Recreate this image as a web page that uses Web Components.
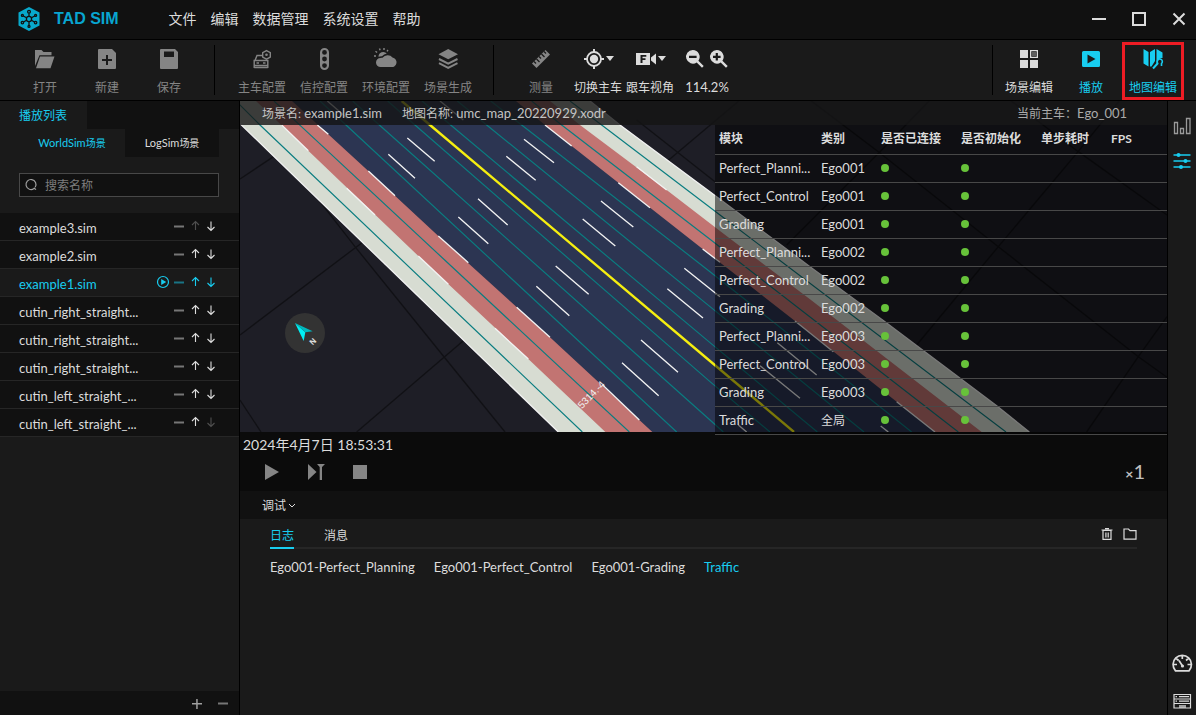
<!DOCTYPE html>
<html lang="zh-CN">
<head>
<meta charset="utf-8">
<meta name="viewport" content="width=device-width, initial-scale=1">
<title>TAD SIM</title>
<style>
  html, body { margin: 0; }
  body {
    --cyan: #18cdf0;
    --panel: #1a1a1a;
    --dark: #111;
    --text: #dcdcdc;
    --mute: #858585;
    background: #000;
    color: var(--text);
    font: 13px/16px Lato, "Noto Sans CJK SC", sans-serif;
  }
</style>
</head>
<body>
<sim-app></sim-app>
<script>
const RESET = `
  *, *::before { box-sizing: border-box; }
  button { all: unset; box-sizing: border-box; cursor: pointer; color: inherit; }
  button:focus-visible { outline: 1px solid var(--cyan); }
  svg { display: block; }
`;

/* Base class: clones the markup of the subclass into an open shadow root. */
class Part extends HTMLElement {
  constructor() {
    super();
    const t = document.createElement('template');
    t.innerHTML = `<style>${RESET}${this.constructor.css}</style>${this.constructor.html}`;
    this.attachShadow({ mode: 'open' }).append(t.content.cloneNode(true));
  }
  static css = '';
  static html = '<slot></slot>';
}

const ICONS = {
  logo: `<path fill="#08a9cc" d="M12 0 22.500 5.600V18.400L12 24 1.500 18.400V5.600z"/>
    <g fill="none" stroke="#111" stroke-width="1.300"><circle cx="12" cy="12" r="2.600"/><circle cx="12" cy="4.800" r="1.400"/><circle cx="12" cy="19.400" r="1"/><circle cx="5.400" cy="8.400" r="1"/><circle cx="18.600" cy="8.400" r="1"/><circle cx="5.400" cy="15.600" r="1.200"/><circle cx="18.600" cy="15.600" r="1.200"/>
    <path d="M12 6.200v3M12 15v3.500M6.300 9l3.300 1.800M17.700 9l-3.300 1.800M6.500 15l3.100-1.800M17.500 15l-3.100-1.800"/></g>`,
  open: `<path d="M2 3h6.500l2 2H18.500v3.200H6.500L2 19zM7 9.500h14.500L17.500 21.300H3z"/>`,
  create: `<path fill-rule="evenodd" d="M4 2h13l4 4v15q0 1-1 1H4q-1 0-1-1V3q0-1 1-1zM11 8v4H7v2h4v4h2v-4h4v-2h-4V8z"/>`,
  save: `<path fill-rule="evenodd" d="M4 2h14l3 3v16q0 1-1 1H4q-1 0-1-1V3q0-1 1-1zM7 4.500v5.500h10V4.500z"/>`,
  car: `<g fill="none" stroke="currentColor" stroke-width="1.400"><path d="M12 8.500H7L5 13.500M4.200 13.500h13.600v5H4.200zM4.200 18.500V21M17.800 18.500V21M4.200 20.500h13.600"/><path d="M6.500 16h2.500M13 16h2.500"/><path d="M16.500 3.600l3.800 2v4.400l-3.800 2.200-3.800-2.200V5.600z"/></g><circle cx="16.500" cy="7.800" r="1.300"/>`,
  light: `<path fill-rule="evenodd" d="M8 5.500a4.500 4.500 0 0 1 9 0v13a4.500 4.500 0 0 1-9 0zM12.500 3a2.400 2.400 0 1 0 0 4.800 2.400 2.400 0 0 0 0-4.800zM12.500 9.600a2.400 2.400 0 1 0 0 4.800 2.400 2.400 0 0 0 0-4.800zM12.500 16.200a2.400 2.400 0 1 0 0 4.800 2.400 2.400 0 0 0 0-4.800z"/>`,
  weather: `<path d="M6.500 20a4.500 4.500 0 0 1 0-9 5 5 0 0 1 2-.2 6.500 6.500 0 0 1 5-2.600 6 6 0 0 1 5 2.300A4.800 4.800 0 0 1 17 20zM4.500 9.800A4.800 4.800 0 0 1 12.800 6.500 8 8 0 0 0 8 9.300 7 7 0 0 0 4.500 9.800z"/><path fill="none" stroke="currentColor" stroke-width="1.400" d="M0 9h2M1.500 4.300l1.600 1.200M5.500 1.500l.6 1.800M10 1v2M14 3l-1 1.400"/>`,
  layers: `<path d="M12.200 2 22 7.300l-9.800 5L2.500 7.300z"/><path fill="none" stroke="currentColor" stroke-width="2" d="M3 12l9.200 4.700 9.300-4.700M3 16.200l9.200 4.700 9.300-4.700"/>`,
  ruler: `<path d="M16.500 3 21 7.500 7.500 21 3 16.500z"/><path stroke="#1a1a1a" stroke-width="1.300" d="M5 14.500l2 2M7.500 12l3 3M10 9.500l2 2M12.500 7l3 3M15 4.500l2 2"/>`,
  target: `<circle cx="12" cy="12" r="7" fill="none" stroke="currentColor" stroke-width="1.800"/><circle cx="12" cy="12" r="4.200"/><path stroke="currentColor" stroke-width="2" d="M12 2v3.500M12 18.500V22M2 12h3.500M18.500 12H22"/>`,
  follow: `<path fill-rule="evenodd" d="M2 6h14v12H2zM6.500 8v8h2v-3h3v-1.800h-3V9.800h3.800V8zM17 10.500l5-4v11l-5-4z"/>`,
  zoomout: `<path fill-rule="evenodd" d="M9.800 3a6.800 6.800 0 0 1 5.600 10.700l5.300 5.300-1.700 1.700-5.300-5.300A6.800 6.800 0 1 1 9.800 3zM6 8.700v2.200h7.600V8.700z"/>`,
  zoomin: `<path fill-rule="evenodd" d="M9.800 3a6.800 6.800 0 0 1 5.600 10.700l5.300 5.300-1.700 1.700-5.300-5.300A6.800 6.800 0 1 1 9.800 3zM8.700 6v2.700H6v2.200h2.700v2.700h2.200v-2.700h2.700V8.700h-2.700V6z"/>`,
  grid: `<path fill-rule="evenodd" d="M3 3h8v8H3zM3 13h8v8H3zM13 13h8v8h-8zM13 3h8v8h-8zM14.300 4.300v5.400h5.400V4.300z"/><path d="M15 5h4v4h-4z" opacity=".35"/>`,
  play: `<path fill-rule="evenodd" d="M4.500 4h15Q21 4 21 5.500v13q0 1.500-1.500 1.500h-15Q3 20 3 18.500v-13Q3 4 4.500 4zM8.500 7.500v9l8-4.500z"/>`,
  map: `<path d="M2.500 2l5 3v14.500l-5-3zM9 5l5-3v12l-3.500 5.500H9zM15.500 2l6 3.500v5.500a4 4 0 0 0-4.500 4.500l-1.500 1.500z"/><path fill="none" stroke="currentColor" stroke-width="2" d="M12 21.500l5-5.500"/><path fill="none" stroke="currentColor" stroke-width="1.600" d="M17 16.500a2.600 2.600 0 1 1 3.500 0v2.500"/>`,
  caret: `<path d="M0 9h8l-4 5z"/>`,
  chevron: `<path fill="none" stroke="currentColor" d="M1 10l3 3 3-3"/>`,
  min: `<path d="M5 11h14v2H5z"/>`,
  max: `<path fill="none" stroke="currentColor" stroke-width="2" d="M6 6h12v12H6z"/>`,
  close: `<path fill="none" stroke="currentColor" stroke-width="2" d="M6.500 6.500l11 11M17.500 6.500l-11 11"/>`,
  search: `<path fill="none" stroke="currentColor" stroke-width="1.200" d="M14 15.500a5 5 0 1 1 1.200-1.300M13.800 14.800l2.200 1.800"/>`,
  bars: `<path fill="none" stroke="currentColor" stroke-width="1.300" d="M4.500 8.500h3v11h-3zM10.500 14.500h3v5h-3zM16.500 4.500h3.500v15h-3.500z"/>`,
  sliders: `<path stroke="currentColor" stroke-width="1.300" d="M3.500 5h17M3.500 11h17M3.500 17h17"/><circle cx="8.500" cy="5" r="2"/><circle cx="15.500" cy="11" r="2"/><circle cx="11" cy="17" r="2"/>`,
  gauge: `<path fill="none" stroke="currentColor" stroke-width="1.700" d="M5.500 19.800A9.200 9.200 0 1 1 19 19.800zM12.300 4.500V8M3.500 13.500H7M17.500 13.500H21M6.300 7.500l2.300 2M18.300 7.500l-2.300 2M12.500 15L9 9.500"/><circle cx="12.500" cy="15" r="1.600"/>`,
  server: `<path fill="none" stroke="currentColor" stroke-width="1.200" d="M4 4.500h16.500v13.500H4zM4 9h16.500M4 13.500h16.500M9 6.700h10M9 11.200h10M5.500 6.700h1.500M5.500 11.200h1.500"/><path d="M9 15h7v3H9z" opacity=".7"/>`,
  minus: `<path d="M7 11.500h10v2H7z" opacity=".5"/>`,
  plus: `<path d="M7 12h10v1.500H7zM11.200 8h1.500v10h-1.500z" opacity=".7"/>`,
  up: `<path fill="none" stroke="currentColor" stroke-width="1.100" d="M12.500 16V7.500M9 11l3.500-3.500L16 11"/>`,
  down: `<path fill="none" stroke="currentColor" stroke-width="1.100" d="M12 7.500V16M8.500 13l3.500 3.500L15.500 13"/>`,
  running: `<circle cx="12" cy="12" r="5.500" fill="none" stroke="currentColor" stroke-width="1.200"/><path d="M10.200 9v6l5-3z"/>`,
  start: `<path d="M5 4l14 8-14 8z"/>`,
  step: `<path d="M4 4l8.500 8L4 20zM13 4h8l-3 3v13h-2.300V7z"/>`,
  stop: `<path d="M5 5h14v14H5z"/>`,
  trash: `<path fill="none" stroke="currentColor" stroke-width="1.200" d="M6.500 8h11M8 8.500h8V17.400H8zM10 6.700h4M10.900 10.500v5M13.200 10.500v5"/>`,
  folder: `<path fill="none" stroke="currentColor" stroke-width="1.200" d="M6 7h4.500l1.500 1.600h6v8.600H6z"/>`
};

class UiIcon extends HTMLElement {
  connectedCallback() {
    if (this.shadowRoot) return;
    const name = this.getAttribute('name');
    const narrow = name === 'caret' || name === 'chevron';
    this.attachShadow({ mode: 'open' }).innerHTML = `
      <style>
        :host { display: block; flex: none; width: ${narrow ? 8 : 24}px; height: 24px; }
        svg { display: block; width: 100%; height: 100%; }
      </style>
      <svg viewBox="0 0 ${narrow ? 8 : 24} 24" fill="currentColor" aria-hidden="true">${ICONS[name]}</svg>`;
  }
}
customElements.define('ui-icon', UiIcon);

class TitleBar extends Part {
  static css = `
    :host { display: flex; align-items: center; height: 40px; padding: 0 3px 1px 17px; background: var(--dark); border-bottom: 1px solid #000; }
    ui-icon.logo { width: 24px; height: 26px; }
    b { margin-left: 13px; font: bold 16px/20px "Liberation Sans", sans-serif; color: #08a5d0; white-space: nowrap; }
    nav { display: flex; gap: 14px; margin-left: 50px; flex: 1; font-size: 14px; line-height: 20px; }
    .win { display: flex; gap: 12px; }
    .win button { width: 28px; padding: 0 2px; }
  `;
  static html = `
    <ui-icon class="logo" name="logo"></ui-icon><b>TAD SIM</b>
    <nav><button>文件</button><button>编辑</button><button>数据管理</button><button>系统设置</button><button>帮助</button></nav>
    <div class="win">
      <button aria-label="最小化"><ui-icon name="min"></ui-icon></button>
      <button aria-label="最大化"><ui-icon name="max"></ui-icon></button>
      <button aria-label="关闭"><ui-icon name="close"></ui-icon></button>
    </div>`;
}
customElements.define('title-bar', TitleBar);

class ToolButton extends Part {
  static css = `
    :host { display: block; width: 62px; height: 60px; color: var(--mute); }
    :host([tight]) { width: 52px; }
    :host([on]) { color: var(--text); }
    :host([active]) { color: var(--cyan); }
    :host([framed]) button { margin-top: 2px; height: 58px; padding-top: 2px; border: 3px solid #ed1c24; }
    button { display: flex; flex-direction: column; align-items: center; gap: 9px; width: 100%; height: 100%; padding-top: 7px; font-size: 12px; line-height: 16px; white-space: nowrap; }
    .icon { display: flex; }
  `;
  static html = `<button><span class="icon"><slot name="icon"></slot></span><span><slot></slot></span></button>`;
}
customElements.define('tool-button', ToolButton);

class ToolGroup extends Part {
  static css = `
    :host { display: flex; align-items: flex-start; padding: 0 0 0 16px; }
    :host([first]) { padding-left: 14px; }
    :host([end]) { margin-left: auto; padding: 0 12px 0 0; }
    i { display: none; align-self: center; width: 1px; height: 50px; background: #000; }
    :host([rule]) i { display: block; margin-left: 14px; }
    :host([end]) i { display: block; order: -1; margin-right: 5px; }
  `;
  static html = `<slot></slot><i></i>`;
}
customElements.define('tool-group', ToolGroup);

class ZoomControl extends Part {
  static css = `
    :host { display: flex; flex-direction: column; align-items: center; gap: 8px; width: 62px; padding-top: 7px; }
    div { display: flex; }
    output { font-size: 13px; line-height: 16px; }
  `;
  static html = `
    <div><button aria-label="缩小"><ui-icon name="zoomout"></ui-icon></button><button aria-label="放大"><ui-icon name="zoomin"></ui-icon></button></div>
    <output>114.2%</output>`;
}
customElements.define('zoom-control', ZoomControl);

class ToolBar extends Part {
  static css = `:host { display: flex; height: 61px; background: var(--panel); border-bottom: 1px solid #000; }`;
  static html = `
    <tool-group first rule>
      <tool-button><ui-icon slot="icon" name="open"></ui-icon>打开</tool-button>
      <tool-button><ui-icon slot="icon" name="create"></ui-icon>新建</tool-button>
      <tool-button><ui-icon slot="icon" name="save"></ui-icon>保存</tool-button>
    </tool-group>
    <tool-group rule>
      <tool-button><ui-icon slot="icon" name="car"></ui-icon>主车配置</tool-button>
      <tool-button><ui-icon slot="icon" name="light"></ui-icon>信控配置</tool-button>
      <tool-button><ui-icon slot="icon" name="weather"></ui-icon>环境配置</tool-button>
      <tool-button><ui-icon slot="icon" name="layers"></ui-icon>场景生成</tool-button>
    </tool-group>
    <tool-group>
      <tool-button><ui-icon slot="icon" name="ruler"></ui-icon>测量</tool-button>
      <tool-button tight on><ui-icon slot="icon" name="target"></ui-icon><ui-icon slot="icon" name="caret"></ui-icon>切换主车</tool-button>
      <tool-button tight on><ui-icon slot="icon" name="follow"></ui-icon><ui-icon slot="icon" name="caret"></ui-icon>跟车视角</tool-button>
      <zoom-control></zoom-control>
    </tool-group>
    <tool-group end>
      <tool-button on><ui-icon slot="icon" name="grid"></ui-icon>场景编辑</tool-button>
      <tool-button active><ui-icon slot="icon" name="play"></ui-icon>播放</tool-button>
      <tool-button active framed><ui-icon slot="icon" name="map"></ui-icon>地图编辑</tool-button>
    </tool-group>`;
}
customElements.define('tool-bar', ToolBar);

class ScenarioRow extends Part {
  static css = `
    :host { display: flex; align-items: center; height: 28px; padding: 3px 20px 0 19px; background: var(--dark); border-bottom: 1px solid #262626; }
    :host([current]) { background: var(--panel); color: var(--cyan); }
    a { flex: 1; color: inherit; text-decoration: none; white-space: nowrap; }
    button { width: 16px; height: 24px; margin-top: -5px; }
    ui-icon { margin-left: -4px; }
    .run { display: none; }
    :host([current]) .run { display: block; }
    :host([top]) .up, :host([bottom]) .down { opacity: .3; }
  `;
  static html = `
    <a href="#"><slot></slot></a>
    <button class="run" aria-label="运行"><ui-icon name="running"></ui-icon></button>
    <button aria-label="移除"><ui-icon name="minus"></ui-icon></button>
    <button class="up" aria-label="上移"><ui-icon name="up"></ui-icon></button>
    <button class="down" aria-label="下移"><ui-icon name="down"></ui-icon></button>`;
}
customElements.define('scenario-row', ScenarioRow);

class PlayList extends Part {
  static css = `
    :host { display: flex; flex-direction: column; background: var(--panel); border-right: 1px solid #000; }
    header { display: flex; height: 28px; background: var(--dark); }
    h2 { margin: 0; width: 87px; padding: 7px 0 5px 19px; font: inherit; font-size: 12px; line-height: 16px; background: var(--panel); color: var(--cyan); }
    .tabs { display: flex; padding-left: 19px; height: 28px; font-size: 11px; line-height: 26px; }
    .tabs small { font-size: 10px; }
    .tabs button { width: 106px; height: 28px; text-align: center; }
    .tabs button + button { width: 94px; background: var(--dark); }
    .tabs [aria-selected=true] { color: var(--cyan); }
    label { display: flex; align-items: center; height: 24px; margin: 16px 20px 16px 19px; background: var(--dark); border: 1px solid #484848; color: #a0a0a0; }
    input { flex: 1; min-width: 0; padding: 2px 0 0 1px; border: 0; outline: 0; background: none; color: var(--text); font: inherit; font-size: 12px; line-height: 16px; }
    input::placeholder { color: #7d7d7d; opacity: 1; }
    footer { display: flex; justify-content: flex-end; gap: 2px; height: 24px; margin-top: auto; padding-right: 4px; background: var(--dark); }
  `;
  static html = `
    <header><h2>播放列表</h2></header>
    <div class="tabs" role="tablist"><button role="tab" aria-selected="true">WorldSim<small>场景</small></button><button role="tab">LogSim<small>场景</small></button></div>
    <label><ui-icon name="search"></ui-icon><input type="text" aria-label="搜索名称" placeholder="搜索名称"></label>
    <div>
      <scenario-row top>example3.sim</scenario-row>
      <scenario-row>example2.sim</scenario-row>
      <scenario-row current>example1.sim</scenario-row>
      <scenario-row>cutin_right_straight...</scenario-row>
      <scenario-row>cutin_right_straight...</scenario-row>
      <scenario-row>cutin_right_straight...</scenario-row>
      <scenario-row>cutin_left_straight_...</scenario-row>
      <scenario-row bottom>cutin_left_straight_...</scenario-row>
    </div>
    <footer><button aria-label="添加"><ui-icon name="plus"></ui-icon></button><button aria-label="删除"><ui-icon name="minus"></ui-icon></button></footer>`;
}
customElements.define('play-list', PlayList);

class RoadMap extends Part {
  static css = `
    :host { display: block; position: relative; overflow: hidden; background: #1e1e26; }
    svg { position: absolute; inset: 0; width: 100%; height: 100%; }
    text { font-family: "Liberation Sans", sans-serif; }
  `;
  static html = `
    <svg viewBox="0 3 2781 993" preserveAspectRatio="xMinYMin slice" role="img" aria-label="道路地图">
      <path stroke="#111115" stroke-width="4" fill="none" d="M0 237L150 137M0 705L370 425M350 996L670 722M240 305L345 440L610 768L795 996M0 900L63 996
        M1280 185L1500 0M1190 60L1425 245M1640 435L1920 155L2070 0M2030 735L2275 440L2510 160L2640 0M2540 996L2695 770L2781 650
        M1710 0L1915 155L2275 440L2695 770L2781 832M2310 0L2515 155L2781 345"/>
      <path fill="#d7dcd2" d="M-70 3L1050 3L1140 75L1440 298L1710 500L1935 665L2270 917L2368 996L955 996z"/>
      <path fill="#c27472" d="M48 3L930 3L1020 75L1280 270L1440 393L1710 598L2225 996L1096 996L865 777L535 468L205 152z"/>
      <path fill="#2c3552" d="M156 3L828 3L915 75L1135 248L1388 447L1665 663L1970 905L2085 996L1237 996L930 712L595 408L385 213z"/>
      <g fill="none" stroke="#0a7d80" stroke-width="3.500">
        <path d="M-12 3L60 75L1027 996M102 3L190 85L614 480L1168 996M240 3L318 75L1310 996M338 3L418 75L1410 960L1450 996M443 3L525 75L1410 845L1590 996
          M546 3L632 75L1410 728L1732 996M652 3L740 75L1410 620L1872 996M752 3L845 75L1410 515L2015 996M875 3L965 75L1410 418L2155 996M990 3L1085 75L1440 345L2298 996"/>
      </g>
      <path fill="none" stroke="#f5ee10" stroke-width="7" d="M485 3L570 75L1410 783L1662 996"/>
      <path fill="none" stroke="#f2f2f2" stroke-width="4" d="M-70 3L955 996M1050 3L1140 75L1440 298L1710 500L1935 665L2270 917L2368 996
        M232 75L265 103M385 213L465 287M595 408L685 488M830 622L930 712M1088 855L1198 960M915 75L995 138M1135 248L1230 323M1388 447L1440 487M1665 663L1780 755M1970 905L2085 996
        M125 75L205 152M320 265L405 345M535 468L625 553M765 685L865 777M1190 200L1280 270
        M502 114L584 184M445 163L525 235M852 118L942 188M799 169L887 241M714 296L803 375M655 351L745 431M1083 303L1180 381M1028 357L1126 438M947 498L1046 583M889 559L988 647
        M1333 505L1440 590M1282 566L1389 654M1203 720L1314 817M1146 788L1256 887M1612 728L1730 825M1560 797L1680 895M1495 975L1520 996M1922 978L1945 996M600 3L670 60M262 3L322 55"/>
      <text transform="translate(1026 928) rotate(-46)" font-size="30" fill="#f0f0f0">5314.-4</text>
      <circle cx="195" cy="699" r="60" fill="#333"/>
      <path fill="#00f0f5" d="M165 669L196 697L191 723z"/><path fill="#00b8bd" d="M165 669L218 694L196 697z"/>
      <text transform="translate(219 725) rotate(-45)" font-size="24" font-weight="bold" fill="#e0e0e0" text-anchor="middle" y="8">N</text>
    </svg>`;
}
customElements.define('road-map', RoadMap);

class ModuleTable extends Part {
  static css = `
    :host { display: block; background: rgba(0, 0, 0, .5); }
    table { width: 100%; border-collapse: collapse; table-layout: fixed; }
    th, td { height: 28px; padding: 0 4px; border-bottom: 1px solid #484848; text-align: left; font-weight: 400; white-space: nowrap; }
    th { height: 29px; font-size: 12px; font-weight: 700; }
    td:first-child { padding-right: 0; }
    i { display: block; width: 8px; height: 8px; border-radius: 50%; background: #67c23a; }
    .c1 { width: 102px; } .c2 { width: 60px; } .c3 { width: 80px; } .c5 { width: 70px; }
    .zh { font-size: 12px; }
  `;
  static html = `
    <table>
      <colgroup><col class="c1"><col class="c2"><col class="c3"><col class="c3"><col class="c5"><col></colgroup>
      <thead><tr><th>模块</th><th>类别</th><th>是否已连接</th><th>是否初始化</th><th>单步耗时</th><th>FPS</th></tr></thead>
      <tbody>${['Ego001', 'Ego002', 'Ego003'].flatMap(e => ['Perfect_Planni...', 'Perfect_Control', 'Grading'].map(m => [m, e]))
        .concat([['Traffic', '<span class="zh">全局</span>']])
        .map(([m, e]) => `<tr><td>${m}</td><td>${e}</td><td><i></i></td><td><i></i></td><td></td><td></td></tr>`).join('')}
      </tbody>
    </table>`;
}
customElements.define('module-table', ModuleTable);

class MapView extends Part {
  static css = `
    :host { display: grid; position: relative; z-index: 1; min-height: 331px; }
    .info { position: absolute; inset: 0 0 auto 0; display: flex; gap: 20px; height: 24px; padding: 4px 40px 4px 22px; background: rgba(20, 20, 20, .8); color: #c4c4c4; white-space: nowrap; }
    .info span:last-child { margin-left: auto; color: #aaa; }
    small { font-size: 12px; }
    module-table { position: absolute; top: 24px; right: 0; width: 452px; }
  `;
  static html = `
    <road-map></road-map>
    <div class="info"><span><small>场景名:</small> example1.sim</span><span><small>地图名称:</small> umc_map_20220929.xodr</span><span><small>当前主车：</small>Ego_001</span></div>
    <module-table></module-table>`;
}
customElements.define('map-view', MapView);

class PlayControls extends Part {
  static css = `
    :host { display: block; height: 59px; background: #0b0b0b; }
    time { display: block; padding: 3px 3px 0; font-size: 14px; line-height: 20px; }
    div { display: flex; align-items: center; gap: 20px; height: 34px; padding: 0 22px 0 20px; color: var(--mute); }
    .speed { margin-left: auto; color: #c0c0c0; font-size: 20px; line-height: 24px; }
    .speed small { font-size: 14px; font-weight: 700; }
  `;
  static html = `
    <time datetime="2024-04-07T18:53:31">2024年4月7日 18:53:31</time>
    <div>
      <button aria-label="开始"><ui-icon name="start"></ui-icon></button>
      <button aria-label="单步"><ui-icon name="step"></ui-icon></button>
      <button aria-label="停止"><ui-icon name="stop"></ui-icon></button>
      <button class="speed"><small>×</small>1</button>
    </div>`;
}
customElements.define('play-controls', PlayControls);

class DebugPanel extends Part {
  static css = `
    :host { display: flex; flex-direction: column; }
    .bar { display: flex; height: 28px; padding: 3px 22px 1px; background: var(--dark); font-size: 12px; line-height: 24px; }
    .bar button { display: flex; gap: 2px; }
    .body { height: 196px; padding: 0 30px; background: var(--panel); }
    .tabs { display: flex; gap: 30px; height: 30px; font-size: 12px; line-height: 34px; box-shadow: inset 0 -2px #262626; }
    .tabs button[role] { height: 30px; }
    .tabs [aria-selected=true] { color: var(--cyan); box-shadow: inset 0 -2px var(--cyan); }
    .tools { display: flex; margin: 3px -4px 0 auto; height: 24px; line-height: 24px; }
    .tools button { width: 23px; }
    nav { display: flex; gap: 19px; padding-top: 10px; line-height: 16px; }
    nav a { color: inherit; text-decoration: none; }
    nav a[aria-current] { color: var(--cyan); }
  `;
  static html = `
    <div class="bar"><button aria-expanded="true">调试<ui-icon name="chevron"></ui-icon></button></div>
    <div class="body">
      <div class="tabs" role="tablist">
        <button role="tab" aria-selected="true">日志</button><button role="tab">消息</button>
        <span class="tools"><button aria-label="清空"><ui-icon name="trash"></ui-icon></button><button aria-label="打开目录"><ui-icon name="folder"></ui-icon></button></span>
      </div>
      <nav><a href="#">Ego001-Perfect_Planning</a><a href="#">Ego001-Perfect_Control</a><a href="#">Ego001-Grading</a><a href="#" aria-current="true">Traffic</a></nav>
    </div>`;
}
customElements.define('debug-panel', DebugPanel);

class SideRail extends Part {
  static css = `
    :host { display: flex; flex-direction: column; align-items: center; gap: 12px; padding: 13px 0 1px; background: var(--panel); border-left: 1px solid #000; }
    .cyan { color: var(--cyan); }
    .push { margin: auto 0 3px; }
    .dim { color: #9a9a9a; }
  `;
  static html = `
    <button class="dim" aria-label="图表"><ui-icon name="bars"></ui-icon></button>
    <button class="cyan" aria-label="模块状态"><ui-icon name="sliders"></ui-icon></button>
    <button class="push" aria-label="仪表盘"><ui-icon name="gauge"></ui-icon></button>
    <button aria-label="列表"><ui-icon name="server"></ui-icon></button>`;
}
customElements.define('side-rail', SideRail);

class SimApp extends Part {
  static css = `
    :host { display: flex; flex-direction: column; min-height: 100vh; }
    main { flex: 1; display: grid; grid-template-columns: 240px minmax(0, 1fr) 29px; }
    section { display: grid; grid-template-rows: 1fr auto auto; }
  `;
  static html = `
    <title-bar></title-bar>
    <tool-bar></tool-bar>
    <main>
      <play-list></play-list>
      <section><map-view></map-view><play-controls></play-controls><debug-panel></debug-panel></section>
      <side-rail></side-rail>
    </main>`;
}
customElements.define('sim-app', SimApp);
</script>
</body>
</html>
